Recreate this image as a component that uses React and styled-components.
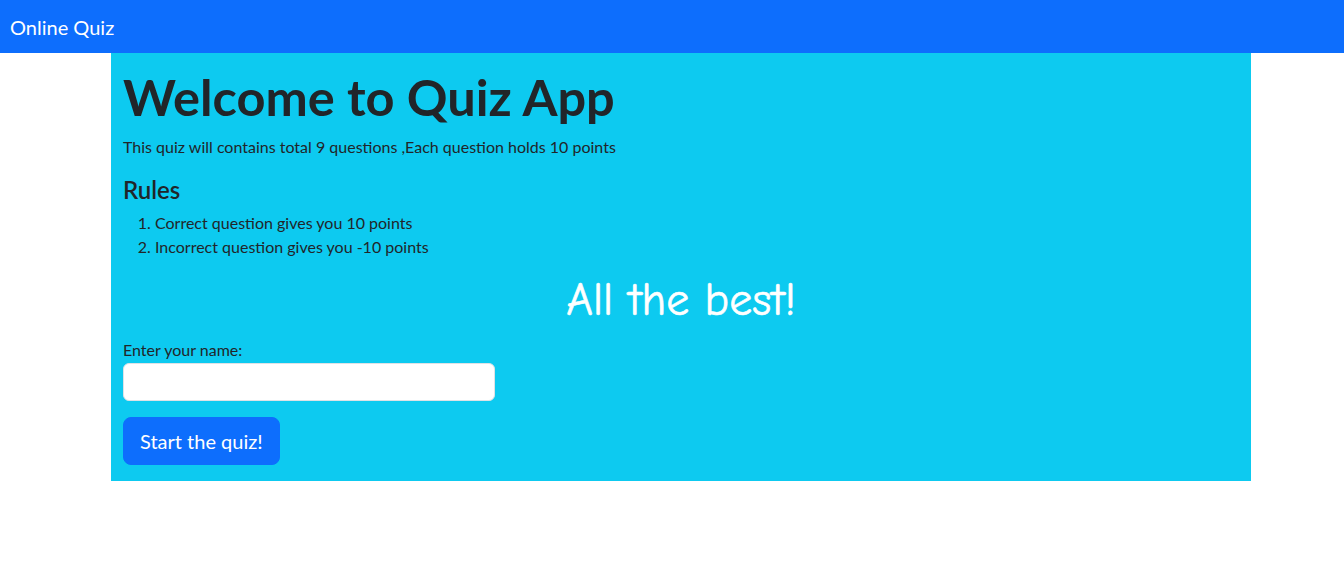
import React, { useState } from 'react';
import styled, { createGlobalStyle } from 'styled-components';

const GlobalStyle = createGlobalStyle`
  * {
    box-sizing: border-box;
  }
  body {
    margin: 0;
    font-family: "Segoe UI", Lato, "Liberation Sans", sans-serif;
    font-size: 16px;
    line-height: 1.5;
    color: #212529;
    background: #fff;
  }
`;

const Navbar = styled.nav`
  height: 53px;
  background: #0d6efd;
  display: flex;
  align-items: center;
  padding: 0 10px;
`;

Navbar.Brand = styled.span`
  color: #fff;
  font-size: 20px;
  line-height: 1.5;
`;

const Container = styled.main`
  width: 1140px;
  margin: 0 0 0 111px;
  background: #0dcaf0;
  padding: 14px 12px 16px;
`;

const Title = styled.h1`
  margin: 0 0 8px;
  font-size: 50.5px;
  font-weight: 700;
  line-height: 60px;
`;

const Intro = styled.p`
  margin: 0 0 17px;
`;

const RulesTitle = styled.h4`
  margin: 0 0 6px;
  font-size: 24px;
  font-weight: 600;
  line-height: 1.2;
`;

const RuleList = styled.ol`
  margin: 0 0 14px;
  padding-left: 32px;
`;

const Cheer = styled.h2`
  margin: 0 0 10px;
  text-align: center;
  color: #fff;
  font-family: "Comic Sans MS", "Comic Neue", "DejaVu Sans", cursive;
  font-size: 46px;
  font-weight: 400;
  line-height: 1.2;
  -webkit-text-stroke: 0.6px #fff;
`;

const Field = styled.div`
  display: flex;
  flex-direction: column;
  align-items: flex-start;
  margin-bottom: 16px;
`;

const Label = styled.label`
  line-height: 24px;
  margin-bottom: 1px;
`;

const NameInput = styled.input`
  width: 372px;
  height: 38px;
  padding: 6px 12px;
  font: inherit;
  border: 1px solid #dee2e6;
  border-radius: 6px;
  background: #fff;
  outline: none;
`;

const StartButton = styled.button`
  height: 48px;
  padding: 8px 16px;
  font-family: inherit;
  font-size: 20px;
  line-height: 1.5;
  color: #fff;
  background: #0d6efd;
  border: 1px solid #0d6efd;
  border-radius: 8px;
  cursor: pointer;
`;

export default function App() {
  const [name, setName] = useState('');

  return (
    <>
      <GlobalStyle />
      <Navbar>
        <Navbar.Brand>Online Quiz</Navbar.Brand>
      </Navbar>
      <Container>
        <Title>Welcome to Quiz App</Title>
        <Intro>This quiz will contains total 9 questions ,Each question holds 10 points</Intro>
        <RulesTitle>Rules</RulesTitle>
        <RuleList>
          <li>Correct question gives you 10 points</li>
          <li>Incorrect question gives you -10 points</li>
        </RuleList>
        <Cheer>All the best!</Cheer>
        <Field>
          <Label htmlFor="name">Enter your name:</Label>
          <NameInput id="name" value={name} onChange={(e) => setName(e.target.value)} />
        </Field>
        <StartButton>Start the quiz!</StartButton>
      </Container>
    </>
  );
}
